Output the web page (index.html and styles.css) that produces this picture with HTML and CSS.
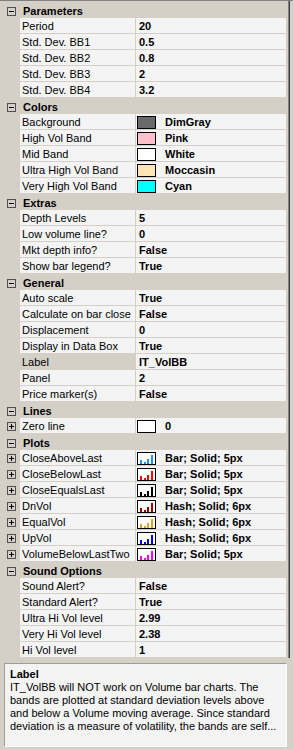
FILE: index.html
```html
<!DOCTYPE html>
<html>
<head>
<meta charset="utf-8">
<link rel="stylesheet" href="styles.css">
</head>
<body>
<div class="frame">
  <div class="top">
    <div class="grid">
      <div class="cat"><span class="box"><i class="h"></i></span><span class="cname">Parameters</span></div>
      <div class="row"><span class="gut"></span><span class="name">Period</span><span class="val">20</span></div>
      <div class="row"><span class="gut"></span><span class="name">Std. Dev. BB1</span><span class="val">0.5</span></div>
      <div class="row"><span class="gut"></span><span class="name">Std. Dev. BB2</span><span class="val">0.8</span></div>
      <div class="row"><span class="gut"></span><span class="name">Std. Dev. BB3</span><span class="val">2</span></div>
      <div class="row"><span class="gut"></span><span class="name">Std. Dev. BB4</span><span class="val">3.2</span></div>

      <div class="cat"><span class="box"><i class="h"></i></span><span class="cname">Colors</span></div>
      <div class="row"><span class="gut"></span><span class="name">Background</span><span class="val"><span class="sw dimgray"></span>DimGray</span></div>
      <div class="row"><span class="gut"></span><span class="name">High Vol Band</span><span class="val"><span class="sw pink"></span>Pink</span></div>
      <div class="row"><span class="gut"></span><span class="name">Mid Band</span><span class="val"><span class="sw white"></span>White</span></div>
      <div class="row"><span class="gut"></span><span class="name">Ultra High Vol Band</span><span class="val"><span class="sw moccasin"></span>Moccasin</span></div>
      <div class="row"><span class="gut"></span><span class="name">Very High Vol Band</span><span class="val"><span class="sw cyan"></span>Cyan</span></div>

      <div class="cat"><span class="box"><i class="h"></i></span><span class="cname">Extras</span></div>
      <div class="row"><span class="gut"></span><span class="name">Depth Levels</span><span class="val">5</span></div>
      <div class="row"><span class="gut"></span><span class="name">Low volume line?</span><span class="val">0</span></div>
      <div class="row"><span class="gut"></span><span class="name">Mkt depth info?</span><span class="val">False</span></div>
      <div class="row"><span class="gut"></span><span class="name">Show bar legend?</span><span class="val">True</span></div>

      <div class="cat"><span class="box"><i class="h"></i></span><span class="cname">General</span></div>
      <div class="row"><span class="gut"></span><span class="name">Auto scale</span><span class="val">True</span></div>
      <div class="row"><span class="gut"></span><span class="name">Calculate on bar close</span><span class="val">False</span></div>
      <div class="row"><span class="gut"></span><span class="name">Displacement</span><span class="val">0</span></div>
      <div class="row"><span class="gut"></span><span class="name">Display in Data Box</span><span class="val">True</span></div>
      <div class="row"><span class="gut"></span><span class="name sel">Label</span><span class="val">IT_VolBB</span></div>
      <div class="row"><span class="gut"></span><span class="name">Panel</span><span class="val">2</span></div>
      <div class="row"><span class="gut"></span><span class="name">Price marker(s)</span><span class="val">False</span></div>

      <div class="cat"><span class="box"><i class="h"></i></span><span class="cname">Lines</span></div>
      <div class="row"><span class="gut"><span class="box"><i class="h"></i><i class="v"></i></span></span><span class="name">Zero line</span><span class="val"><span class="sw white"></span>0</span></div>

      <div class="cat"><span class="box"><i class="h"></i></span><span class="cname">Plots</span></div>
      <div class="row"><span class="gut"><span class="box"><i class="h"></i><i class="v"></i></span></span><span class="name">CloseAboveLast</span><span class="val"><svg class="plot" width="19" height="13" viewBox="0 0 19 13"><rect x="0.5" y="0.5" width="18" height="12" fill="#fff" stroke="#000"/><g fill="#1e90ff"><rect x="3" y="8" width="2" height="4"/><rect x="7" y="10" width="2" height="2"/><rect x="10" y="7" width="2" height="5"/><rect x="14" y="3" width="2" height="9"/></g></svg>Bar; Solid; 5px</span></div>
      <div class="row"><span class="gut"><span class="box"><i class="h"></i><i class="v"></i></span></span><span class="name">CloseBelowLast</span><span class="val"><svg class="plot" width="19" height="13" viewBox="0 0 19 13"><rect x="0.5" y="0.5" width="18" height="12" fill="#fff" stroke="#000"/><g fill="#ff0000"><rect x="3" y="8" width="2" height="4"/><rect x="7" y="10" width="2" height="2"/><rect x="10" y="7" width="2" height="5"/><rect x="14" y="3" width="2" height="9"/></g></svg>Bar; Solid; 5px</span></div>
      <div class="row"><span class="gut"><span class="box"><i class="h"></i><i class="v"></i></span></span><span class="name">CloseEqualsLast</span><span class="val"><svg class="plot" width="19" height="13" viewBox="0 0 19 13"><rect x="0.5" y="0.5" width="18" height="12" fill="#fff" stroke="#000"/><g fill="#000"><rect x="3" y="8" width="2" height="4"/><rect x="7" y="10" width="2" height="2"/><rect x="10" y="7" width="2" height="5"/><rect x="14" y="3" width="2" height="9"/></g></svg>Bar; Solid; 5px</span></div>
      <div class="row"><span class="gut"><span class="box"><i class="h"></i><i class="v"></i></span></span><span class="name">DnVol</span><span class="val"><svg class="plot" width="19" height="13" viewBox="0 0 19 13"><rect x="0.5" y="0.5" width="18" height="12" fill="#fff" stroke="#000"/><g fill="#a00000"><rect x="3" y="8" width="2" height="4"/><rect x="7" y="10" width="2" height="2"/><rect x="10" y="7" width="2" height="5"/><rect x="14" y="3" width="2" height="9"/></g></svg>Hash; Solid; 6px</span></div>
      <div class="row"><span class="gut"><span class="box"><i class="h"></i><i class="v"></i></span></span><span class="name">EqualVol</span><span class="val"><svg class="plot" width="19" height="13" viewBox="0 0 19 13"><rect x="0.5" y="0.5" width="18" height="12" fill="#fff" stroke="#000"/><g fill="#daa520"><rect x="3" y="8" width="2" height="4"/><rect x="7" y="10" width="2" height="2"/><rect x="10" y="7" width="2" height="5"/><rect x="14" y="3" width="2" height="9"/></g></svg>Hash; Solid; 6px</span></div>
      <div class="row"><span class="gut"><span class="box"><i class="h"></i><i class="v"></i></span></span><span class="name">UpVol</span><span class="val"><svg class="plot" width="19" height="13" viewBox="0 0 19 13"><rect x="0.5" y="0.5" width="18" height="12" fill="#fff" stroke="#000"/><g fill="#0000ff"><rect x="3" y="8" width="2" height="4"/><rect x="7" y="10" width="2" height="2"/><rect x="10" y="7" width="2" height="5"/><rect x="14" y="3" width="2" height="9"/></g></svg>Hash; Solid; 6px</span></div>
      <div class="row"><span class="gut"><span class="box"><i class="h"></i><i class="v"></i></span></span><span class="name">VolumeBelowLastTwo</span><span class="val"><svg class="plot" width="19" height="13" viewBox="0 0 19 13"><rect x="0.5" y="0.5" width="18" height="12" fill="#fff" stroke="#000"/><g fill="#ff00ff"><rect x="3" y="8" width="2" height="4"/><rect x="7" y="10" width="2" height="2"/><rect x="10" y="7" width="2" height="5"/><rect x="14" y="3" width="2" height="9"/></g></svg>Bar; Solid; 5px</span></div>

      <div class="cat"><span class="box"><i class="h"></i></span><span class="cname">Sound Options</span></div>
      <div class="row"><span class="gut"></span><span class="name">Sound Alert?</span><span class="val">False</span></div>
      <div class="row"><span class="gut"></span><span class="name">Standard Alert?</span><span class="val">True</span></div>
      <div class="row"><span class="gut"></span><span class="name">Ultra Hi Vol level</span><span class="val">2.99</span></div>
      <div class="row"><span class="gut"></span><span class="name">Very Hi Vol level</span><span class="val">2.38</span></div>
      <div class="row"><span class="gut"></span><span class="name">Hi Vol level</span><span class="val">1</span></div>
    </div>
    <div class="edge"></div>
  </div>
  <div class="desc">
    <div class="dtitle">Label</div>
    <div class="dline">IT_VolBB will NOT work on Volume bar charts. The</div>
    <div class="dline">bands are plotted at standard deviation levels above</div>
    <div class="dline">and below a Volume moving average. Since standard</div>
    <div class="dline">deviation is a measure of volatility, the bands are self...</div>
  </div>
</div>
</body>
</html>
```

FILE: styles.css
```css
html, body {
  margin: 0;
  padding: 0;
  background: #d4d0c8;
}
body {
  font-family: "Liberation Sans", Arial, sans-serif;
  font-size: 11px;
  color: #000;
  width: 293px;
  height: 749px;
  overflow: hidden;
}
.frame {
  display: flex;
  flex-direction: column;
  width: 293px;
  height: 749px;
}
.top {
  display: flex;
  border-top: 1px solid #808080;
}
.grid {
  width: 286px;
  padding-top: 1px;
  background: #d4d0c8;
}
.edge {
  margin-left: 2px;
  width: 1px;
  border-right: 1px solid #404040;
  background: #808080;
}
.cat {
  display: flex;
  align-items: center;
  height: 16px;
  background: #d4d0c8;
}
.cat .box {
  margin-left: 7px;
  margin-top: 2px;
}
.cname {
  font-weight: bold;
  margin-left: 7px;
  padding-top: 1px;
}
.box {
  position: relative;
  width: 7px;
  height: 7px;
  border: 1px solid #505050;
  display: inline-block;
  box-sizing: content-box;
}
.box .h {
  position: absolute;
  left: 1px;
  top: 3px;
  width: 5px;
  height: 1px;
  background: #000;
}
.box .v {
  position: absolute;
  left: 3px;
  top: 1px;
  width: 1px;
  height: 5px;
  background: #000;
}
.row {
  display: grid;
  grid-template-columns: 20px 116px 150px;
  height: 15px;
  border-bottom: 1px solid #d4d0c8;
}
.gut {
  background: #d4d0c8;
  display: flex;
  align-items: center;
}
.gut .box {
  margin-left: 7px;
  margin-top: 1px;
}
.name {
  background: #f4f4f4;
  border-right: 1px solid #d4d0c8;
  padding-left: 2px;
  line-height: 15px;
  padding-top: 1px;
  height: 14px;
  white-space: nowrap;
  overflow: hidden;
}
.name.sel {
  background: #d4d0c8;
}
.val {
  background: #f4f4f4;
  font-weight: bold;
  padding-left: 3px;
  line-height: 15px;
  padding-top: 1px;
  height: 14px;
  display: flex;
  align-items: flex-start;
  white-space: nowrap;
  overflow: hidden;
}
.sw {
  width: 17px;
  height: 11px;
  border: 1px solid #000;
  margin: 1px 9px 0 -2px;
  flex: none;
}
.plot {
  flex: none;
  margin: 1px 9px 0 -2px;
}
.dimgray { background: #696969; }
.pink { background: #ffc0cb; }
.white { background: #ffffff; }
.moccasin { background: #ffe4b5; }
.cyan { background: #00ffff; }
.desc {
  margin: 5px 6px 2px 4px;
  height: 82px;
  border: 1px solid #a09c94;
  border-right-color: #ffffff;
  border-bottom-color: #ffffff;
  background: #f4f4f4;
  padding: 3px 0 0 5px;
}
.dtitle {
  font-weight: bold;
  line-height: 14px;
}
.dline {
  line-height: 13px;
  white-space: nowrap;
}
```
